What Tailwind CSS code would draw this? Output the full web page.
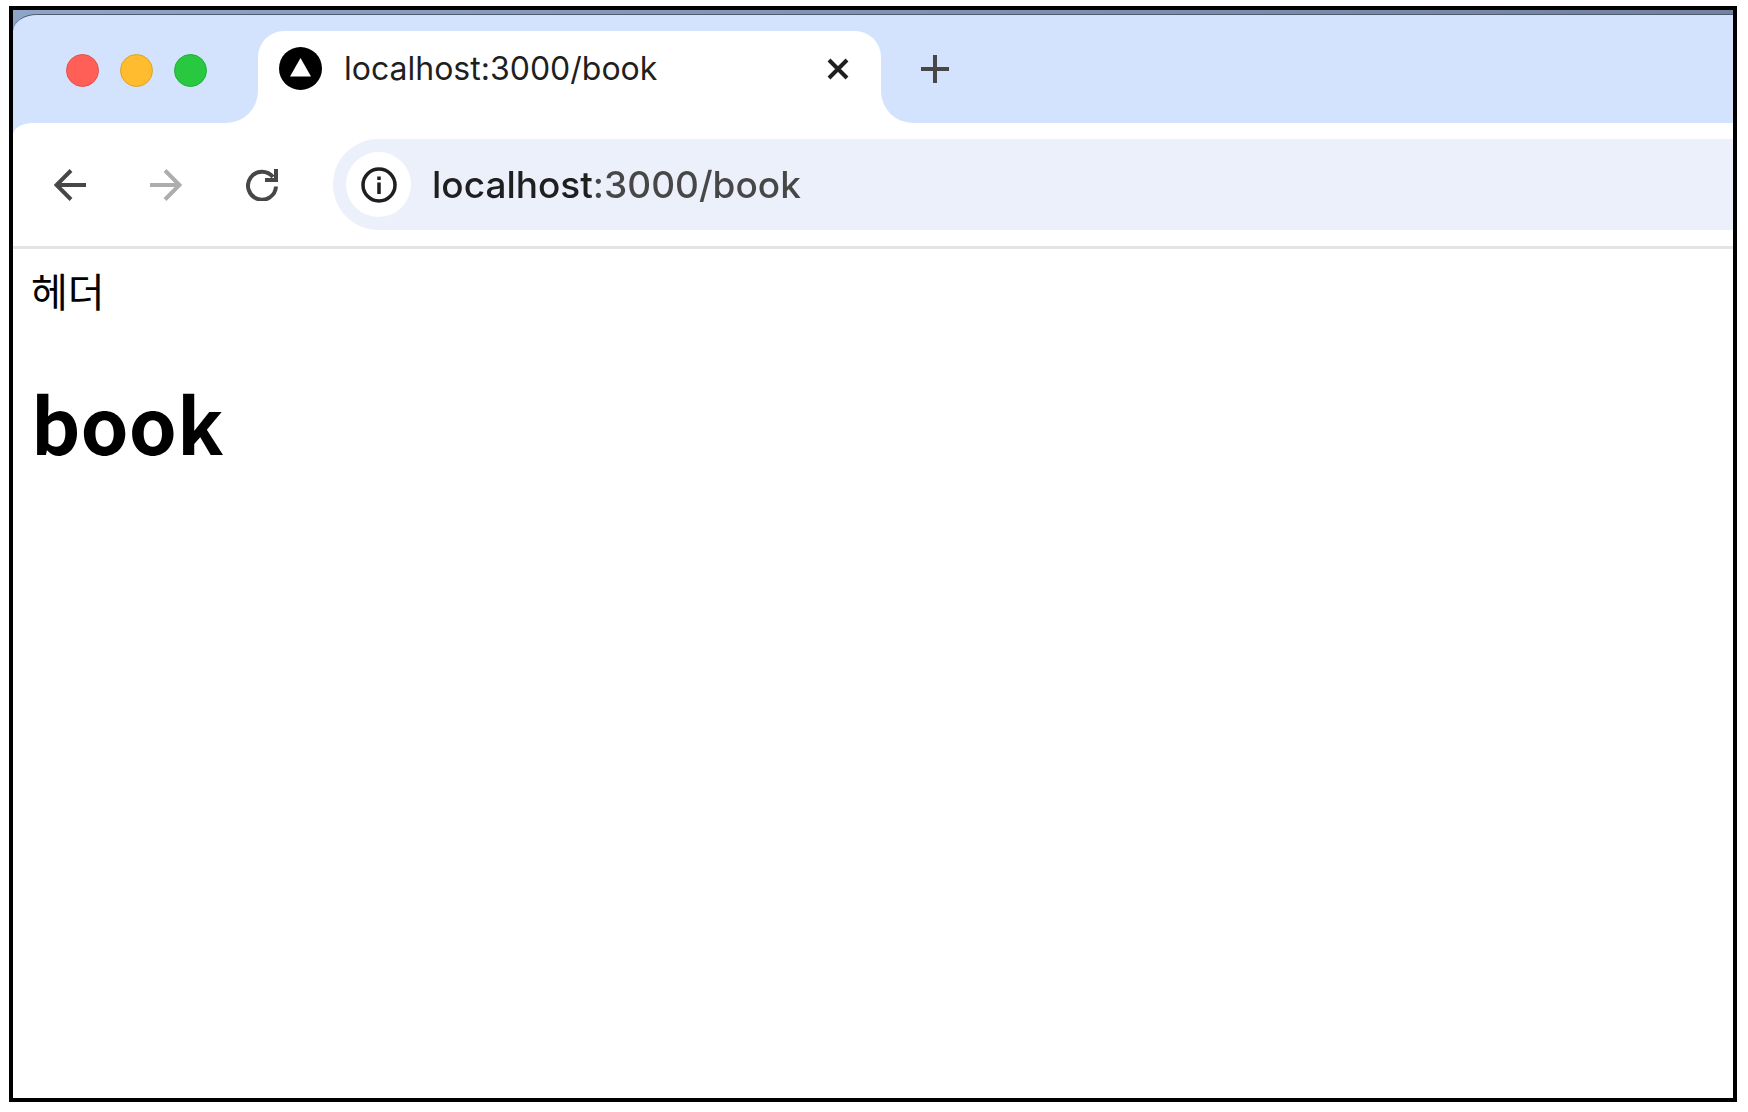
<!DOCTYPE html>
<html lang="ko">
<head>
<meta charset="utf-8">
<title>localhost:3000/book</title>
<script src="https://cdn.jsdelivr.net/npm/@tailwindcss/browser@4"></script>
</head>
<body class="bg-white">
<div class="flex min-h-screen pt-[6px] pr-[11px] pb-[10px] pl-[9px] font-['Inter','Noto_Sans_CJK_KR',sans-serif]">
  <div class="flex grow flex-col border-4 border-black bg-linear-to-r from-[#8ea5c6] to-[#71839e] pt-1">
    <div class="flex grow flex-col rounded-tl-[24px_17px] border-t border-[#4d5a70] bg-[#d3e2fd]">

      <!-- Tab strip -->
      <header class="flex h-[108px] items-end">
        <div class="flex h-[108px] shrink-0 items-center gap-[21px] pt-0.5 pl-[53px]">
          <button aria-label="Close window" class="size-[33px] rounded-full border border-[#e2504a] bg-[#ff5f57]"></button>
          <button aria-label="Minimize window" class="size-[33px] rounded-full border border-[#e0a128] bg-[#febc2e]"></button>
          <button aria-label="Zoom window" class="size-[33px] rounded-full border border-[#1fae34] bg-[#28c840]"></button>
        </div>
        <svg class="ml-[19px] size-8 shrink-0" viewBox="0 0 32 32" aria-hidden="true"><path d="M0 32A32 32 0 0 0 32 0V32Z" fill="#fff"/></svg>
        <div class="flex h-[92px] w-[623px] items-start rounded-t-[26px] bg-white pt-4 pr-[31px] pl-[21px]">
          <svg class="size-[43px] shrink-0" viewBox="0 0 43 43" aria-hidden="true"><circle cx="21.500" cy="21.500" r="21.500" fill="#000"/><path d="M21.500 11L32 29.500H11Z" fill="#fff"/></svg>
          <a href="#" class="ml-[22px] grow text-[32px] leading-[43px] text-[#1f1f1f]">localhost:3000/book</a>
          <button aria-label="Close tab" class="flex h-[43px] items-center"><svg class="size-6" viewBox="0 0 24 24" fill="none" stroke="#1f1f1f" stroke-width="4"><path d="M3 3L21 21M21 3L3 21"/></svg></button>
        </div>
        <svg class="size-8 shrink-0" viewBox="0 0 32 32" aria-hidden="true"><path d="M0 0A32 32 0 0 0 32 32H0Z" fill="#fff"/></svg>
        <button aria-label="New tab" class="ml-2 flex h-[108px] items-center"><svg class="size-7" viewBox="0 0 28 28" fill="none" stroke="#474747" stroke-width="4"><path d="M14 0V28M0 14H28"/></svg></button>
      </header>

      <!-- Toolbar -->
      <nav class="flex h-[126px] items-center rounded-tl-[20px_12px] border-b-3 border-[#e3e3e3] bg-white pl-[41px]">
        <button aria-label="Back"><svg class="size-8" viewBox="0 0 32 32" fill="none" stroke="#474747" stroke-width="4"><path d="M32 16H3M17 1.500L2.500 16L17 30.500"/></svg></button>
        <button aria-label="Forward" class="ml-16"><svg class="size-8" viewBox="0 0 32 32" fill="none" stroke="#adadad" stroke-width="4"><path d="M0 16H29M15 1.500L29.500 16L15 30.500"/></svg></button>
        <button aria-label="Reload" class="ml-16"><svg class="size-8" viewBox="0 0 32 32" fill="none" stroke="#474747" stroke-width="4"><path d="M30 17.500A14 14 0 1 1 27 8"/><path d="M30 0V11H19"/></svg></button>
        <form class="ml-[55px] flex h-[91px] grow items-center rounded-l-full bg-[#ecf0fa] pl-[13px]">
          <button type="button" aria-label="Site information" class="flex size-[65px] shrink-0 items-center justify-center rounded-full bg-white"><svg class="size-9" viewBox="0 0 36 36" fill="none" stroke="#1f1f1f"><circle cx="18" cy="18" r="16" stroke-width="3.500"/><path d="M18 15.500V27M18 9.500V13" stroke-width="3.500"/></svg></button>
          <input aria-label="Address" type="text" value="localhost:3000/book" class="ml-[21px] h-[60px] grow bg-[linear-gradient(to_right,#1f1f1f_162px,#474747_162px)] bg-clip-text text-[37px] font-[450] text-transparent caret-black outline-none">
        </form>
      </nav>

      <!-- Page content -->
      <main class="grow bg-white px-[18px] pt-[13px] text-black">
        <div class="font-['Noto_Sans_CJK_KR',sans-serif] text-[40px] leading-[56px]">헤더</div>
        <h1 class="mt-12 font-['Noto_Sans_CJK_KR',sans-serif] text-[77px] leading-[112px] font-bold">book</h1>
      </main>
    </div>
  </div>
</div>
</body>
</html>
